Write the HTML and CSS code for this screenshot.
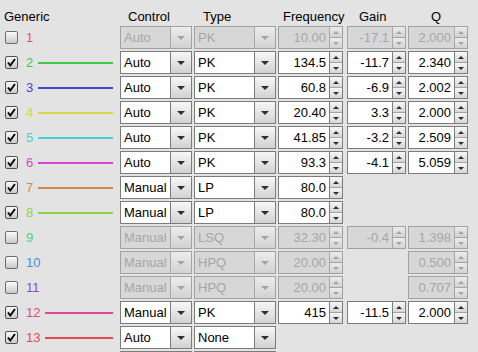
FILE: index.html
```html
<!DOCTYPE html>
<html lang="en">
<head>
<meta charset="UTF-8">
<meta name="viewport" content="width=device-width, initial-scale=1.0">
<title>Bands</title>
<link rel="stylesheet" href="styles.css">
</head>
<body>
<div class="panel">
  <div class="header">
    <div class="col-generic"><span class="h-generic">Generic</span></div>
    <div class="col-control"><span class="h-control">Control</span></div>
    <div class="col-type"><span class="h-type">Type</span></div>
    <div class="col-freq"><span class="h-freq">Frequency</span></div>
    <div class="col-gain"><span class="h-gain">Gain</span></div>
    <div class="col-q"><span class="h-q">Q</span></div>
  </div>
  <div id="bandList"></div>
</div>
<script>
// One entry per band, in list order
const bands = [
  { n: 1,  color: '#e25454', on: false, control: 'Auto',   type: 'PK',   freq: '10.00', gain: '-17.1', q: '2.000' },
  { n: 2,  color: '#44c844', on: true,  control: 'Auto',   type: 'PK',   freq: '134.5', gain: '-11.7', q: '2.340' },
  { n: 3,  color: '#4646d6', on: true,  control: 'Auto',   type: 'PK',   freq: '60.8',  gain: '-6.9',  q: '2.002' },
  { n: 4,  color: '#d6d646', on: true,  control: 'Auto',   type: 'PK',   freq: '20.40', gain: '3.3',   q: '2.000' },
  { n: 5,  color: '#46d2d2', on: true,  control: 'Auto',   type: 'PK',   freq: '41.85', gain: '-3.2',  q: '2.509' },
  { n: 6,  color: '#d246d2', on: true,  control: 'Auto',   type: 'PK',   freq: '93.3',  gain: '-4.1',  q: '5.059' },
  { n: 7,  color: '#d2884a', on: true,  control: 'Manual', type: 'LP',   freq: '80.0' },
  { n: 8,  color: '#8cd246', on: true,  control: 'Manual', type: 'LP',   freq: '80.0' },
  { n: 9,  color: '#46d28c', on: false, control: 'Manual', type: 'LSQ',  freq: '32.30', gain: '-0.4',  q: '1.398' },
  { n: 10, color: '#4690e0', on: false, control: 'Manual', type: 'HPQ',  freq: '20.00', q: '0.500' },
  { n: 11, color: '#9046d6', on: false, control: 'Manual', type: 'HPQ',  freq: '20.00', q: '0.707' },
  { n: 12, color: '#e04a8a', on: true,  control: 'Manual', type: 'PK',   freq: '415',   gain: '-11.5', q: '2.000' },
  { n: 13, color: '#e04c4c', on: true,  control: 'Auto',   type: 'None' }
];

const checkSvg = '<svg width="11" height="11" viewBox="0 0 11 11"><polyline points="2,5.5 4.3,8.5 9,2" fill="none" stroke="#000" stroke-width="1.9"/></svg>';

function combo(cls, value) {
  return '<div class="combo ' + cls + '"><span class="val">' + value + '</span>' +
         '<span class="btn"><i class="tri-down"></i></span></div>';
}

function spin(cls, value) {
  if (value === undefined) {
    return '<div class="' + cls + '"></div>';
  }
  return '<div class="spin ' + cls + '"><span class="val">' + value + '</span>' +
         '<span class="arrows"><span><i class="tri-up"></i></span><span><i class="tri-dn"></i></span></span></div>';
}

const bandList = document.getElementById('bandList');
bands.forEach(band => {
  const row = document.createElement('div');
  row.className = band.on ? 'row' : 'row off';
  let html = '<div class="col-generic">';
  html += '<span class="cb">' + (band.on ? checkSvg : '') + '</span>';
  html += '<span class="num" style="color:' + band.color + '">' + band.n + '</span>';
  if (band.on) {
    html += '<span class="trace" style="background:' + band.color + '"></span>';
  }
  html += '</div>';
  html += combo('col-control', band.control);
  html += combo('col-type', band.type);
  html += spin('col-freq', band.freq);
  html += spin('col-gain', band.gain);
  html += spin('col-q', band.q);
  row.innerHTML = html;
  bandList.appendChild(row);
});

// next band scrolls in below the fold: only its top edge shows
const nextRow = document.createElement('div');
nextRow.className = 'row';
nextRow.innerHTML = '<div class="col-generic"></div>' + combo('col-control', '') + combo('col-type', '');
bandList.appendChild(nextRow);
</script>
</body>
</html>
```

FILE: styles.css
```css
html, body {
  margin: 0;
  padding: 0;
  height: 352px;
  overflow: hidden;
}

body {
  background-color: #e3e3e3;
  color: #000;
  font-family: 'Liberation Sans', Arial, sans-serif;
  font-size: 13px;
}

.header {
  display: flex;
  align-items: center;
  height: 20px;
  padding-top: 6px;
}

.header span {
  display: block;
}

.h-generic { padding-left: 4px; }
.h-control { padding-left: 8px; }
.h-type { padding-left: 9px; }
.h-freq { padding-left: 5px; }
.h-gain { padding-left: 12px; }
.h-q { padding-left: 23px; }

/* column widths, gaps are the right margins */
.col-generic { width: 120px; flex: none; }
.col-control { width: 72px; margin-right: 2px; flex: none; }
.col-type { width: 82px; margin-right: 2px; flex: none; }
.col-freq { width: 65px; margin-right: 4px; flex: none; }
.col-gain { width: 59px; margin-right: 2px; flex: none; }
.col-q { width: 60px; flex: none; }

.row {
  display: flex;
  height: 23px;
  margin-bottom: 2px;
}

.row .col-generic {
  display: flex;
  align-items: center;
  padding-left: 5px;
  box-sizing: border-box;
}

.cb {
  width: 13px;
  height: 13px;
  box-sizing: border-box;
  border: 1px solid #4f4f4f;
  border-radius: 2px;
  background: linear-gradient(#fbfbfb, #c9c9c9);
  margin-right: 8px;
  display: flex;
  justify-content: center;
  align-items: center;
  flex: none;
}

.off .cb {
  border-color: #6e6e6e;
}

.num {
  line-height: 15px;
}

.trace {
  flex: 1;
  height: 2px;
  margin: 0 7px 0 5px;
}

.combo,
.spin {
  display: flex;
  height: 23px;
  box-sizing: border-box;
  border: 1px solid #7c7c7c;
  background-color: #fff;
}

.combo .val {
  flex: 1;
  padding-left: 3px;
  line-height: 21px;
  white-space: nowrap;
  overflow: hidden;
}

.combo .btn {
  width: 20px;
  border-left: 1px solid #7c7c7c;
  background: linear-gradient(#f7f7f7, #d2d2d2);
  display: flex;
  justify-content: center;
  align-items: center;
}

.tri-down {
  display: block;
  width: 0;
  height: 0;
  border-left: 4px solid transparent;
  border-right: 4px solid transparent;
  border-top: 4px solid #2e2e2e;
}

.spin .val {
  flex: 1;
  text-align: right;
  padding-right: 3px;
  line-height: 21px;
}

.spin .arrows {
  width: 12px;
  border-left: 1px solid #7c7c7c;
  display: flex;
  flex-direction: column;
}

.spin .arrows span {
  flex: 1;
  background: linear-gradient(#f7f7f7, #d6d6d6);
  display: flex;
  justify-content: center;
  align-items: center;
}

.spin .arrows span:first-child {
  border-bottom: 1px solid #a4a4a4;
}

.tri-up,
.tri-dn {
  display: block;
  width: 0;
  height: 0;
  border-left: 3px solid transparent;
  border-right: 3px solid transparent;
}

.tri-up { border-bottom: 3px solid #2e2e2e; }
.tri-dn { border-top: 3px solid #2e2e2e; }

/* disabled bands */
.off .combo,
.off .spin {
  background-color: #d7d7d7;
  border-color: #a2a2a2;
  color: #a6a6a6;
}

.off .combo .btn,
.off .spin .arrows {
  border-left-color: #a8a8a8;
}

.off .combo .btn,
.off .spin .arrows span {
  background: linear-gradient(#ececec, #d2d2d2);
}

.off .tri-down { border-top-color: #a3a3a3; }
.off .tri-up { border-bottom-color: #a3a3a3; }
.off .tri-dn { border-top-color: #a3a3a3; }
```
